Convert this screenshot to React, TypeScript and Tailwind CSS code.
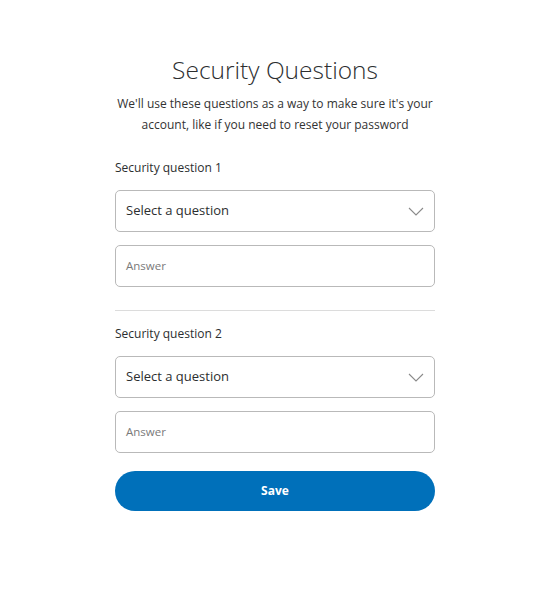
import React from "react";

function Chevron() {
  return (
    <svg width="16" height="9" viewBox="0 0 16 9" fill="none" className="shrink-0">
      <path d="M1 1l7 7 7-7" stroke="#8a8a8a" strokeWidth="1.1" />
    </svg>
  );
}

function Select() {
  return (
    <div className="h-[42px] rounded-[5px] border border-[#b9b9b9] flex items-center justify-between pl-[10px] pr-[10px]">
      <span className="text-[13px] text-[#2c2e2f]">Select a question</span>
      <Chevron />
    </div>
  );
}

function Answer() {
  return (
    <div className="h-[42px] rounded-[5px] border border-[#b9b9b9] flex items-center pl-[10px]">
      <span className="text-[11.5px] text-[#7a7a7a]">Answer</span>
    </div>
  );
}

function Group({ n }: { n: number }) {
  return (
    <div className="flex flex-col">
      <div className="text-[12px] text-[#2c2e2f] leading-[16px]">Security question {n}</div>
      <div className="mt-[14px]"><Select /></div>
      <div className="mt-[13px]"><Answer /></div>
    </div>
  );
}

export default function App() {
  return (
    <div
      className="w-[554px] h-[600px] bg-white flex flex-col items-center pr-[4px]"
      style={{ fontFamily: '"Open Sans", "Noto Sans", sans-serif' }}
    >
      <div className="w-[320px] flex flex-col pt-[52px]">
        <h1 className="text-center text-[24.5px] font-light text-[#2c2e2f] leading-[36px]">Security Questions</h1>
        <p className="mt-[5px] text-center text-[12px] leading-[21px] text-[#333333]">
          We'll use these questions as a way to make sure it's your account, like if you need to reset your password
        </p>
        <div className="mt-[25px]"><Group n={1} /></div>
        <div className="mt-[23px] h-px bg-[#dcdcdc]" />
        <div className="mt-[15px]"><Group n={2} /></div>
        <button className="mt-[18px] h-[40px] rounded-full bg-[#0070ba] text-white text-[12px] font-bold">Save</button>
      </div>
    </div>
  );
}
